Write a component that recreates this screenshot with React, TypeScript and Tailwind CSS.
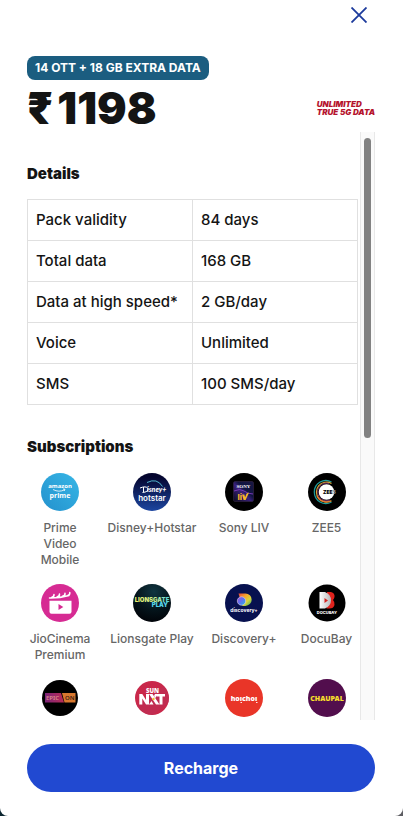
import { useState } from 'react';

const details = [
  { label: 'Pack validity', value: '84 days' },
  { label: 'Total data', value: '168 GB' },
  { label: 'Data at high speed*', value: '2 GB/day' },
  { label: 'Voice', value: 'Unlimited' },
  { label: 'SMS', value: '100 SMS/day' },
];

function PrimeLogo() {
  return (
    <svg viewBox="0 0 38 38" className="size-full" fontFamily="'Open Sans', sans-serif" fontWeight="700" fill="#fff">
      <defs>
        <linearGradient id="prime" x1="0" y1="1" x2="1" y2="0">
          <stop offset="0" stopColor="#2491cd" />
          <stop offset="1" stopColor="#36b6e6" />
        </linearGradient>
      </defs>
      <circle cx="19" cy="19" r="19" fill="url(#prime)" />
      <text x="19" y="15" fontSize="6" textAnchor="middle">amazon</text>
      <path d="M12 16.500q6 3.200 11.500 .3M22 16l2 .2-.8 1.800" fill="none" stroke="#fff" strokeWidth=".8" />
      <text x="19" y="25" fontSize="7" textAnchor="middle">prime</text>
    </svg>
  );
}

function HotstarLogo() {
  return (
    <svg viewBox="0 0 38 38" className="size-full" fill="#fff">
      <defs>
        <linearGradient id="hotstar" x1="0" y1="0" x2="0" y2="1">
          <stop offset=".1" stopColor="#04052e" />
          <stop offset="1" stopColor="#1d46a0" />
        </linearGradient>
      </defs>
      <circle cx="19" cy="19" r="19" fill="url(#hotstar)" />
      <path d="M14 9.500q10-5 15.500 4" fill="none" stroke="#59c8dc" strokeWidth=".9" />
      <path d="M7 15q6-2.500 8 .5 .5 3.500-5.500 4M10.500 14v5" fill="none" stroke="#fff" strokeWidth="1" />
      <text x="14" y="19" fontSize="7" fontStyle="italic" fontWeight="900" fontFamily="Lato, sans-serif">isney+</text>
      <text x="19" y="28" fontSize="8" fontWeight="600" textAnchor="middle" fontFamily="Inter, sans-serif">hotstar</text>
    </svg>
  );
}

function SonyLogo() {
  return (
    <svg viewBox="0 0 38 38" className="size-full">
      <defs>
        <linearGradient id="sony" x1="0" y1="1" x2="1" y2="0">
          <stop offset="0" stopColor="#0b0a1c" />
          <stop offset=".45" stopColor="#39207c" />
          <stop offset=".6" stopColor="#101540" />
          <stop offset="1" stopColor="#191744" />
        </linearGradient>
      </defs>
      <circle cx="19" cy="19" r="19" />
      <rect x="8.500" y="8.500" width="20" height="20" rx="1.500" fill="url(#sony)" stroke="#3c2a4c" strokeWidth=".5" />
      <path d="M9 18q6-3 10 0t9 3" fill="none" stroke="#7838b5" strokeWidth="1" />
      <text x="18.500" y="15" fontSize="5" fontWeight="700" fill="#fff" textAnchor="middle" fontFamily="'Liberation Serif', serif">SONY</text>
      <text x="12.500" y="27" fontSize="8" fontWeight="800" fill="#f6b62a" fontFamily="Inter, sans-serif">li</text>
      <path d="M17 21.500h2.300l.8 2.800 1.500-3.800 2.500-1-3.500 7.500h-2z" fill="#f6b62a" />
    </svg>
  );
}

function Zee5Logo() {
  return (
    <svg viewBox="0 0 38 38" className="size-full">
      <circle cx="19" cy="19" r="19" />
      <circle cx="18.500" cy="19" r="7.800" fill="#fff" />
      <path d="M23.500 9A11.500 11.500 0 1 0 23.500 29" fill="none" stroke="#1e9c9a" strokeWidth="1.300" />
      <path d="M23.500 10.500A10 10 0 1 0 23.500 27.700" fill="none" stroke="#d9a636" strokeWidth="1.200" />
      <path d="M21 10.500A8.800 8.800 0 1 0 22 27" fill="none" stroke="#8a3a7b" strokeWidth=".8" />
      <path d="M9 23q4 8 14 5" fill="none" stroke="#e37a32" strokeWidth="1.300" />
      <text x="15" y="21" fontSize="5" fontWeight="900" fontFamily="Inter, sans-serif">
        ZEE<tspan fill="#999">5</tspan>
      </text>
    </svg>
  );
}

function JioCinemaLogo() {
  return (
    <svg viewBox="0 0 38 38" className="size-full">
      <circle cx="19" cy="19" r="19" fill="#d62b93" />
      <path d="M8.500 16.800h22v11a2 2 0 0 1-2 2h-18a2 2 0 0 1-2-2z" fill="#fff" />
      <path d="M8.500 14q10 .2 19.500-2.500M13 10.500q.3 2.300-2.500 3M18.500 10q.3 2.300-2.500 3M24 9.300q.3 2.300-2.500 3M28.800 8.500q.3 2.300-2 3" fill="none" stroke="#fff" strokeWidth="1.500" strokeLinecap="round" />
      <path d="M17.500 20v6l4.800-3z" fill="#d62b93" />
    </svg>
  );
}

function LionsgateLogo() {
  return (
    <svg viewBox="0 0 38 38" className="size-full" fontFamily="Inter, sans-serif" fontWeight="900">
      <defs>
        <radialGradient id="lionsgate" cx=".55" cy=".2" r=".8">
          <stop offset="0" stopColor="#103440" />
          <stop offset=".6" stopColor="#04141b" />
          <stop offset="1" stopColor="#010409" />
        </radialGradient>
        <linearGradient id="lionsgateText">
          <stop offset="0" stopColor="#f4ee6a" />
          <stop offset=".6" stopColor="#c9ec90" />
          <stop offset="1" stopColor="#4dd3e8" />
        </linearGradient>
      </defs>
      <circle cx="19" cy="19" r="19" fill="url(#lionsgate)" />
      <text x="19" y="18" fontSize="6" textAnchor="middle" fill="url(#lionsgateText)">LIONSGATE</text>
      <text x="35" y="23" fontSize="6" textAnchor="end" fill="#55d4ea">PLAY</text>
    </svg>
  );
}

function DiscoveryLogo() {
  return (
    <svg viewBox="0 0 38 38" className="size-full">
      <defs>
        <linearGradient id="discovery" x1="0" y1="0" x2="1" y2="1">
          <stop offset="0" stopColor="#e8443a" />
          <stop offset=".35" stopColor="#f6a52b" />
          <stop offset=".65" stopColor="#d7d63b" />
          <stop offset="1" stopColor="#2ca36a" />
        </linearGradient>
        <linearGradient id="discoveryGlobe" x1="0" y1="0" x2="1" y2="1">
          <stop offset="0" stopColor="#a34fd8" />
          <stop offset=".5" stopColor="#5b74f0" />
          <stop offset="1" stopColor="#27b7df" />
        </linearGradient>
      </defs>
      <circle cx="19" cy="19" r="19" fill="#07114f" />
      <path d="M13.500 9.500h7a6.200 6.200 0 0 1 0 12.400h-3z" fill="url(#discovery)" />
      <circle cx="16.500" cy="17" r="4.200" fill="url(#discoveryGlobe)" stroke="#e4d5ec" strokeWidth=".6" />
      <text x="19" y="28" fontSize="5" fontWeight="700" fill="#fff" textAnchor="middle" fontFamily="Inter, sans-serif">discovery+</text>
    </svg>
  );
}

function DocuBayLogo() {
  return (
    <svg viewBox="0 0 38 38" className="size-full">
      <defs>
        <linearGradient id="docubay">
          <stop offset="0" stopColor="#fff" />
          <stop offset="1" stopColor="#b9b9bb" />
        </linearGradient>
      </defs>
      <circle cx="19" cy="19" r="18.500" />
      <path d="M19 8h4q4 1 3.500 5-.5 2-1.500 3 2 2 1.500 5-1 3.500-5 3.500h-3z" fill="#e0231d" />
      <path d="M11.500 8h5.500q6 2.500 6 8.300T17 24.500h-5.500z" fill="url(#docubay)" />
      <path d="M16.500 14v5l3.500-2.500z" fill="#d62320" />
      <text x="19" y="30" fontSize="4" fontWeight="800" fill="#fff" textAnchor="middle" fontFamily="Inter, sans-serif">DOCUBAY</text>
    </svg>
  );
}

function EpicOnLogo() {
  return (
    <svg viewBox="0 0 38 38" className="size-full" fontFamily="'Noto Sans', sans-serif" fontWeight="600" fontSize="6">
      <defs>
        <linearGradient id="epic">
          <stop offset="0" stopColor="#7c2478" />
          <stop offset="1" stopColor="#b92c56" />
        </linearGradient>
      </defs>
      <circle cx="19" cy="19" r="18" />
      <path d="M4 14h16l3 9.500H4z" fill="url(#epic)" />
      <path d="M21 14h13.500v9.500h-11z" fill="#d8782e" />
      <text x="5" y="21" fill="#dd8f8c">EPIC</text>
      <text x="24" y="21" fill="#3d1c12">ON</text>
    </svg>
  );
}

function SunNxtLogo() {
  return (
    <svg viewBox="0 0 38 38" className="size-full" fill="#fff" fontFamily="'Open Sans', sans-serif" fontWeight="800">
      <circle cx="19" cy="19" r="17" fill="#c9284a" />
      <path d="M4 27L31 7l5 10v6L20 36q-10 0-16-9z" fill="#b92f57" opacity=".5" />
      <text x="19.500" y="14" fontSize="6" textAnchor="middle">SUN</text>
      <path d="M6.300 25.500V15h3l3.700 6v-6h3v10.500h-3l-3.700-6v6zM16 15h3.500l7 10.500H23zM24 15h8v2.500h-2.500v8h-3v-8H24z" />
      <path d="M18.500 22l2 3.500h-4.500zM22 15h3l-2.500 4-1.500-2z" />
      <circle cx="20.500" cy="20" r="1.200" fill="#f2c231" />
    </svg>
  );
}

function HoichoiLogo() {
  return (
    <svg viewBox="0 0 38 38" className="size-full">
      <circle cx="19" cy="19" r="19" fill="#e93528" />
      <text x="19" y="21.500" fontSize="7" fontWeight="800" fill="#fff" textAnchor="middle" fontFamily="'Open Sans', sans-serif">hoıchoı</text>
      <path d="M17 23.500h-1.500M31 23.500h1.500" stroke="#fff" strokeWidth=".9" />
    </svg>
  );
}

function ChaupalLogo() {
  return (
    <svg viewBox="0 0 38 38" className="size-full">
      <circle cx="19" cy="19" r="19" fill="#520e4d" />
      <text x="19" y="21.500" fontSize="7" fontWeight="900" fill="#f7df2b" textAnchor="middle" fontFamily="'Noto Sans', sans-serif">CHAUPAL</text>
    </svg>
  );
}

const subscriptions = [
  { name: 'Prime Video Mobile', logo: PrimeLogo },
  { name: 'Disney+Hotstar', logo: HotstarLogo },
  { name: 'Sony LIV', logo: SonyLogo },
  { name: 'ZEE5', logo: Zee5Logo },
  { name: 'JioCinema Premium', logo: JioCinemaLogo },
  { name: 'Lionsgate Play', logo: LionsgateLogo },
  { name: 'Discovery+', logo: DiscoveryLogo },
  { name: 'DocuBay', logo: DocuBayLogo },
  { name: 'EPIC ON', logo: EpicOnLogo },
  { name: 'Sun NXT', logo: SunNxtLogo },
  { name: 'Hoichoi', logo: HoichoiLogo },
  { name: 'Chaupal', logo: ChaupalLogo },
];

export default function App() {
  const [scrolled, setScrolled] = useState(0);

  const handleScroll = (e: React.UIEvent<HTMLDivElement>) => {
    const el = e.currentTarget;
    setScrolled(el.scrollTop / Math.max(1, el.scrollHeight - el.clientHeight));
  };

  return (
    <div className="h-screen bg-linear-to-r from-[#0b2530] to-[#5d5d62] font-[Inter,'Noto_Sans',sans-serif] text-[#141414]">
      <div role="dialog" aria-label="Plan details" className="flex h-full flex-col rounded-b-lg bg-white pr-7 pb-6 pl-[27px]">
        <div className="flex justify-end pt-[3px]">
          <button type="button" aria-label="Close" className="mr-1 size-6 p-1 text-[#1c3a9c]">
            <svg viewBox="0 0 16 16" className="size-4" fill="none" stroke="currentColor" strokeWidth="1.800">
              <path d="M.5.5l15 15M15.500.5l-15 15" />
            </svg>
          </button>
        </div>

        <div className="mt-[29px] flex">
          <span className="flex h-6 items-center rounded-lg bg-[#1b5d80] px-2 text-xs font-bold text-white">
            14 OTT + 18 GB EXTRA DATA
          </span>
        </div>
        <div className="flex h-[52px] items-center justify-between">
          <h1 className="flex gap-1 pt-1 text-[44px] leading-12 font-black">
            <span>₹</span>
            <span>1198</span>
          </h1>
          <p className="pt-1 text-[8px] leading-2 font-black text-[#b5132d] italic">
            UNLIMITED
            <br />
            TRUE 5G DATA
          </p>
        </div>

        <div className="flex min-h-0 flex-1">
          <div className="flex-1 overflow-y-auto [scrollbar-width:none]" onScroll={handleScroll}>
            <h2 className="mt-8 text-[15px] leading-5 font-black">Details</h2>
            <div className="mt-[15px] pr-0.5">
              <table className="w-full table-fixed border-collapse text-[15px] leading-6 font-medium">
                <tbody>
                  {details.map((row) => (
                    <tr key={row.label}>
                      <th scope="row" className="border border-[#e0e0e0] px-2 py-2 text-left font-medium whitespace-nowrap">{row.label}</th>
                      <td className="border border-[#e0e0e0] px-2 py-2">{row.value}</td>
                    </tr>
                  ))}
                </tbody>
              </table>
            </div>

            <h2 className="mt-8 text-[15px] leading-5 font-black">Subscriptions</h2>
            <ul className="mt-4 grid grid-cols-[66fr_86fr_66fr_67fr] gap-4">
              {subscriptions.map(({ name, logo: Logo }) => (
                <li key={name} className="flex min-w-0 flex-col items-center">
                  <div className="size-[38px]">
                    <Logo />
                  </div>
                  <p className="mt-[9px] text-center text-xs leading-4 font-medium text-[#666]">{name}</p>
                </li>
              ))}
            </ul>
          </div>

          <div className="flex w-[15px] flex-col items-center border-x border-[#e8e8e8] bg-[#fafafa] py-1.5">
            <div style={{ flexGrow: scrolled * 48 }} />
            <div className="h-[52%] w-[7px] rounded-full bg-[#828282]" />
            <div style={{ flexGrow: (1 - scrolled) * 48 }} />
          </div>
        </div>

        <button type="button" className="mt-6 h-12 w-full shrink-0 rounded-full bg-[#2149d1] text-base font-bold text-white">
          Recharge
        </button>
      </div>
    </div>
  );
}
